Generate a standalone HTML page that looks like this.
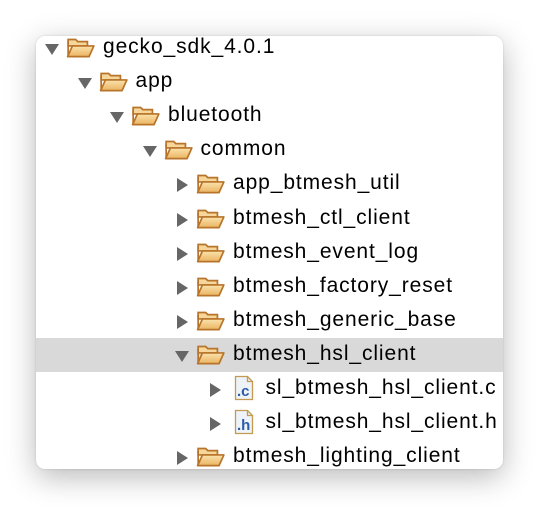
<!DOCTYPE html>
<html><head><style>
body{margin:0;width:540px;height:506px;background:#fff;position:relative;overflow:hidden;font-family:"Liberation Sans",sans-serif;}
.card{position:absolute;left:36px;top:36px;width:467px;height:433px;background:#fff;border-radius:9px;box-shadow:0 8px 30px rgba(0,0,0,0.28),0 0 2px rgba(0,0,0,0.15);overflow:hidden;}
.row{position:absolute;left:0;width:467px;height:34px;}
.sel{background:#d9d9d9;}
.tri{position:absolute;top:11px;}
.txt{position:absolute;top:4px;font-size:21px;letter-spacing:0.9px;color:#000;white-space:nowrap;}
.ico{position:absolute;top:3px;}
</style></head><body>
<div class="card" id="c"></div>
<script>
const rows=[[0,'gecko_sdk_4.0.1','d','f'],[1,'app','d','f'],[2,'bluetooth','d','f'],[3,'common','d','f'],
[4,'app_btmesh_util','r','f'],[4,'btmesh_ctl_client','r','f'],[4,'btmesh_event_log','r','f'],[4,'btmesh_factory_reset','r','f'],
[4,'btmesh_generic_base','r','f'],[4,'btmesh_hsl_client','d','f',1],[5,'sl_btmesh_hsl_client.c','r','c'],[5,'sl_btmesh_hsl_client.h','r','h'],[4,'btmesh_lighting_client','r','f']];
const folder='<svg width="30" height="26" viewBox="0 0 28 22"><defs><linearGradient id="g" x1="0" y1="0" x2="0" y2="1"><stop offset="0" stop-color="#fbe3ad"/><stop offset="1" stop-color="#eab461"/></linearGradient></defs><path d="M2 4h7l2 2h9v4H2z" fill="#f6d69a" stroke="#b8742a" stroke-width="1.6"/><path d="M1.5 20L6 10h20l-4.5 10z" fill="url(#g)" stroke="#b8742a" stroke-width="1.6" stroke-linejoin="round"/><path d="M2 20V6" stroke="#b8742a" stroke-width="1.6"/></svg>';
const file=l=>'<svg width="20" height="26" viewBox="0 0 20 26"><path d="M1.5 1.5h12l5 5v18h-17z" fill="#eef3fa" stroke="#c49a50" stroke-width="1.3"/><path d="M13.5 1.5v5h5" fill="none" stroke="#c49a50" stroke-width="1.3"/><text x="3" y="21" font-family="Liberation Sans" font-weight="bold" font-size="15" fill="#2a5aa8">.'+l+'</text></svg>';
let h='';
rows.forEach((r,i)=>{
 const y=Math.round(i*34.1-5); const x=8+r[0]*32.5;
 const tri=r[2]=='d'?'<svg width="16" height="12"><path d="M1 1h14L8 12z" fill="#666"/></svg>':'<svg width="12" height="14"><path d="M1 0v14l11-7z" fill="#666"/></svg>';
 const ic=r[3]=='f'?folder:file(r[3]);
 const ix=r[3]=='f'?x+22:x+27;
 h+=`<div class="row${r[4]?' sel':''}" style="top:${y}px"><span class="tri" style="left:${r[2]=='d'?x:x+2}px">${tri}</span><span class="ico" style="left:${ix}px">${ic}</span><span class="txt" style="left:${x+59}px">${r[1]}</span></div>`;
});
document.getElementById('c').innerHTML=h;
</script>
</body></html>
